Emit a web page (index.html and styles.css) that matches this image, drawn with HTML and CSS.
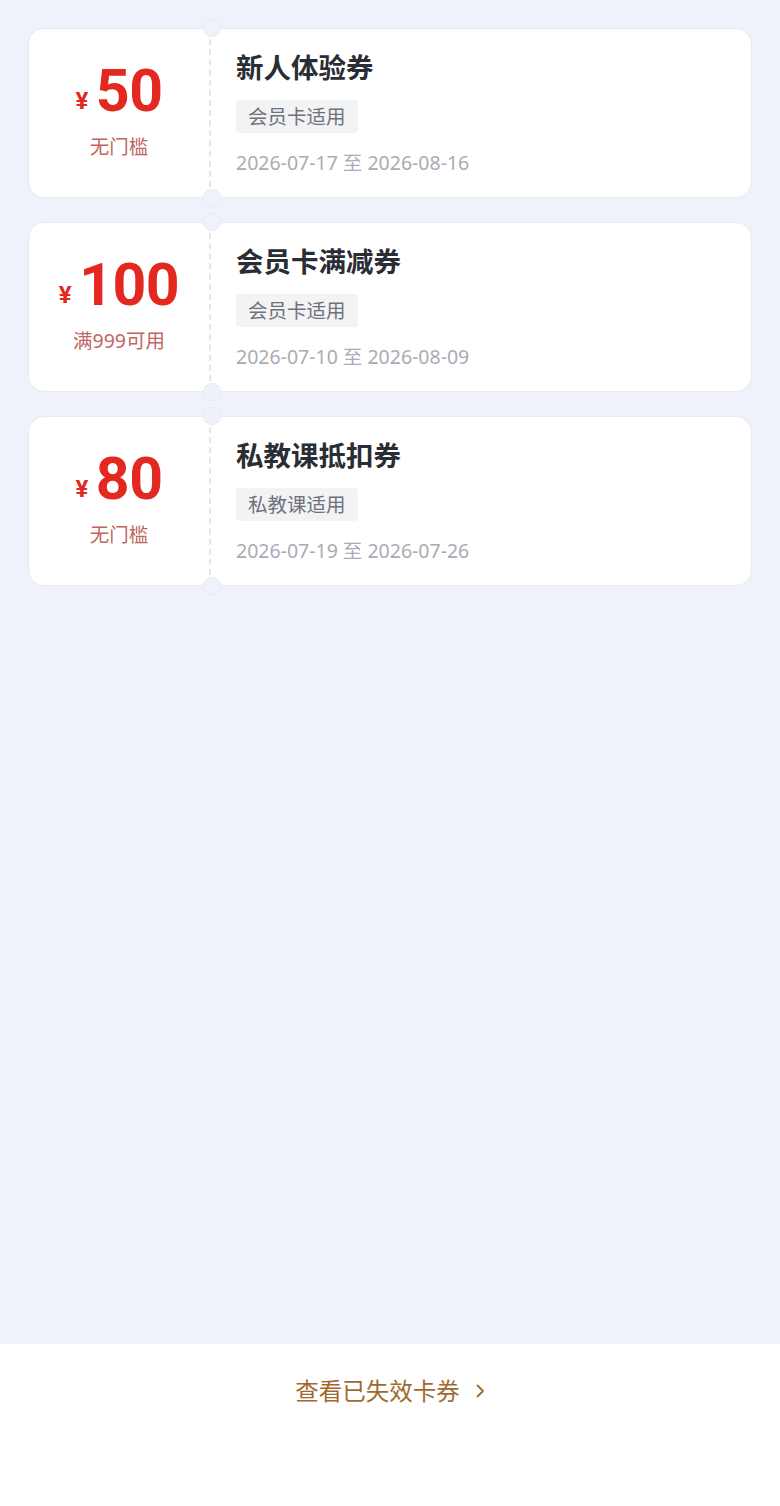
FILE: index.html
```html
<html>
	<head>
		<meta charset="utf-8">
		<link rel="stylesheet" href="styles.css">
	</head>

	<body>
		<div class="page">
			<div class="list">
				<div class="coupon">
					<div class="left">
						<div class="amount"><span class="yen">¥</span>50</div>
						<div class="cond">无门槛</div>
					</div>
					<div class="right">
						<h3>新人体验券</h3>
						<span class="tag">会员卡适用</span>
						<p class="date">2026-07-17 至 2026-08-16</p>
					</div>
					<i class="notch top"></i>
					<i class="notch bottom"></i>
				</div>

				<div class="coupon">
					<div class="left">
						<div class="amount"><span class="yen">¥</span>100</div>
						<div class="cond">满999可用</div>
					</div>
					<div class="right">
						<h3>会员卡满减券</h3>
						<span class="tag">会员卡适用</span>
						<p class="date">2026-07-10 至 2026-08-09</p>
					</div>
					<i class="notch top"></i>
					<i class="notch bottom"></i>
				</div>

				<div class="coupon">
					<div class="left">
						<div class="amount"><span class="yen">¥</span>80</div>
						<div class="cond">无门槛</div>
					</div>
					<div class="right">
						<h3>私教课抵扣券</h3>
						<span class="tag">私教课适用</span>
						<p class="date">2026-07-19 至 2026-07-26</p>
					</div>
					<i class="notch top"></i>
					<i class="notch bottom"></i>
				</div>
			</div>

			<div class="footer">
				<a class="expired">查看已失效卡券
					<svg width="10" height="16" viewBox="0 0 10 16"><path d="M2.5 2.5 L8 8 L2.5 13.5" fill="none" stroke="#a0692f" stroke-width="1.8" stroke-linecap="round" stroke-linejoin="round"/></svg>
				</a>
			</div>
		</div>
	</body>
</html>
```

FILE: styles.css
```css
*{
	margin:0;
	padding:0;
	box-sizing:border-box;
}
body{
	background:#eff2fa;
	font-family:"Noto Sans","Noto Sans CJK SC",sans-serif;
}
.page{
	min-height:1506px;
	display:flex;
	flex-direction:column;
}
.list{
	flex:1;
	padding:28px 28px;
	display:flex;
	flex-direction:column;
	gap:24px;
}
.coupon{
	position:relative;
	height:170px;
	background:#fff;
	border:1px solid #e8eaf0;
	border-radius:16px;
	display:flex;
}
.left{
	width:182px;
	border-right:2px dashed #e4e6ec;
	display:flex;
	flex-direction:column;
	align-items:center;
	justify-content:center;
	padding-bottom:5px;
}
.amount{
	color:#e2281f;
	font-family:"Roboto","Noto Sans",sans-serif;
	font-weight:700;
	font-size:59px;
	line-height:60px;
	letter-spacing:-0.5px;
}
.yen{
	font-size:24px;
	margin-right:8px;
	vertical-align:2px;
}
.cond{
	margin-top:3px;
	font-size:19.5px;
	line-height:26px;
	color:#c0665f;
}
.right{
	flex:1;
	padding:21px 0 0 25px;
}
.right h3{
	font-size:27.5px;
	line-height:36px;
	font-weight:700;
	color:#2a2d33;
}
.tag{
	display:inline-block;
	margin-top:14px;
	padding:0 12px;
	height:33px;
	line-height:33px;
	font-size:19.5px;
	color:#6f727a;
	background:#f2f3f5;
	border-radius:4px;
}
.date{
	margin-top:17px;
	font-size:19.5px;
	line-height:26px;
	color:#a9acb4;
}
.notch{
	position:absolute;
	left:174px;
	width:18px;
	height:18px;
	border-radius:50%;
	background:#eff2fa;
	border:1px solid #e8eaf0;
}
.notch.top{
	top:-10px;
}
.notch.bottom{
	bottom:-10px;
}
.footer{
	height:162px;
	background:#fff;
	padding-top:31px;
	text-align:center;
}
.expired{
	font-size:23.5px;
	line-height:32px;
	color:#a0692f;
	display:inline-flex;
	align-items:center;
	gap:15px;
}
```
